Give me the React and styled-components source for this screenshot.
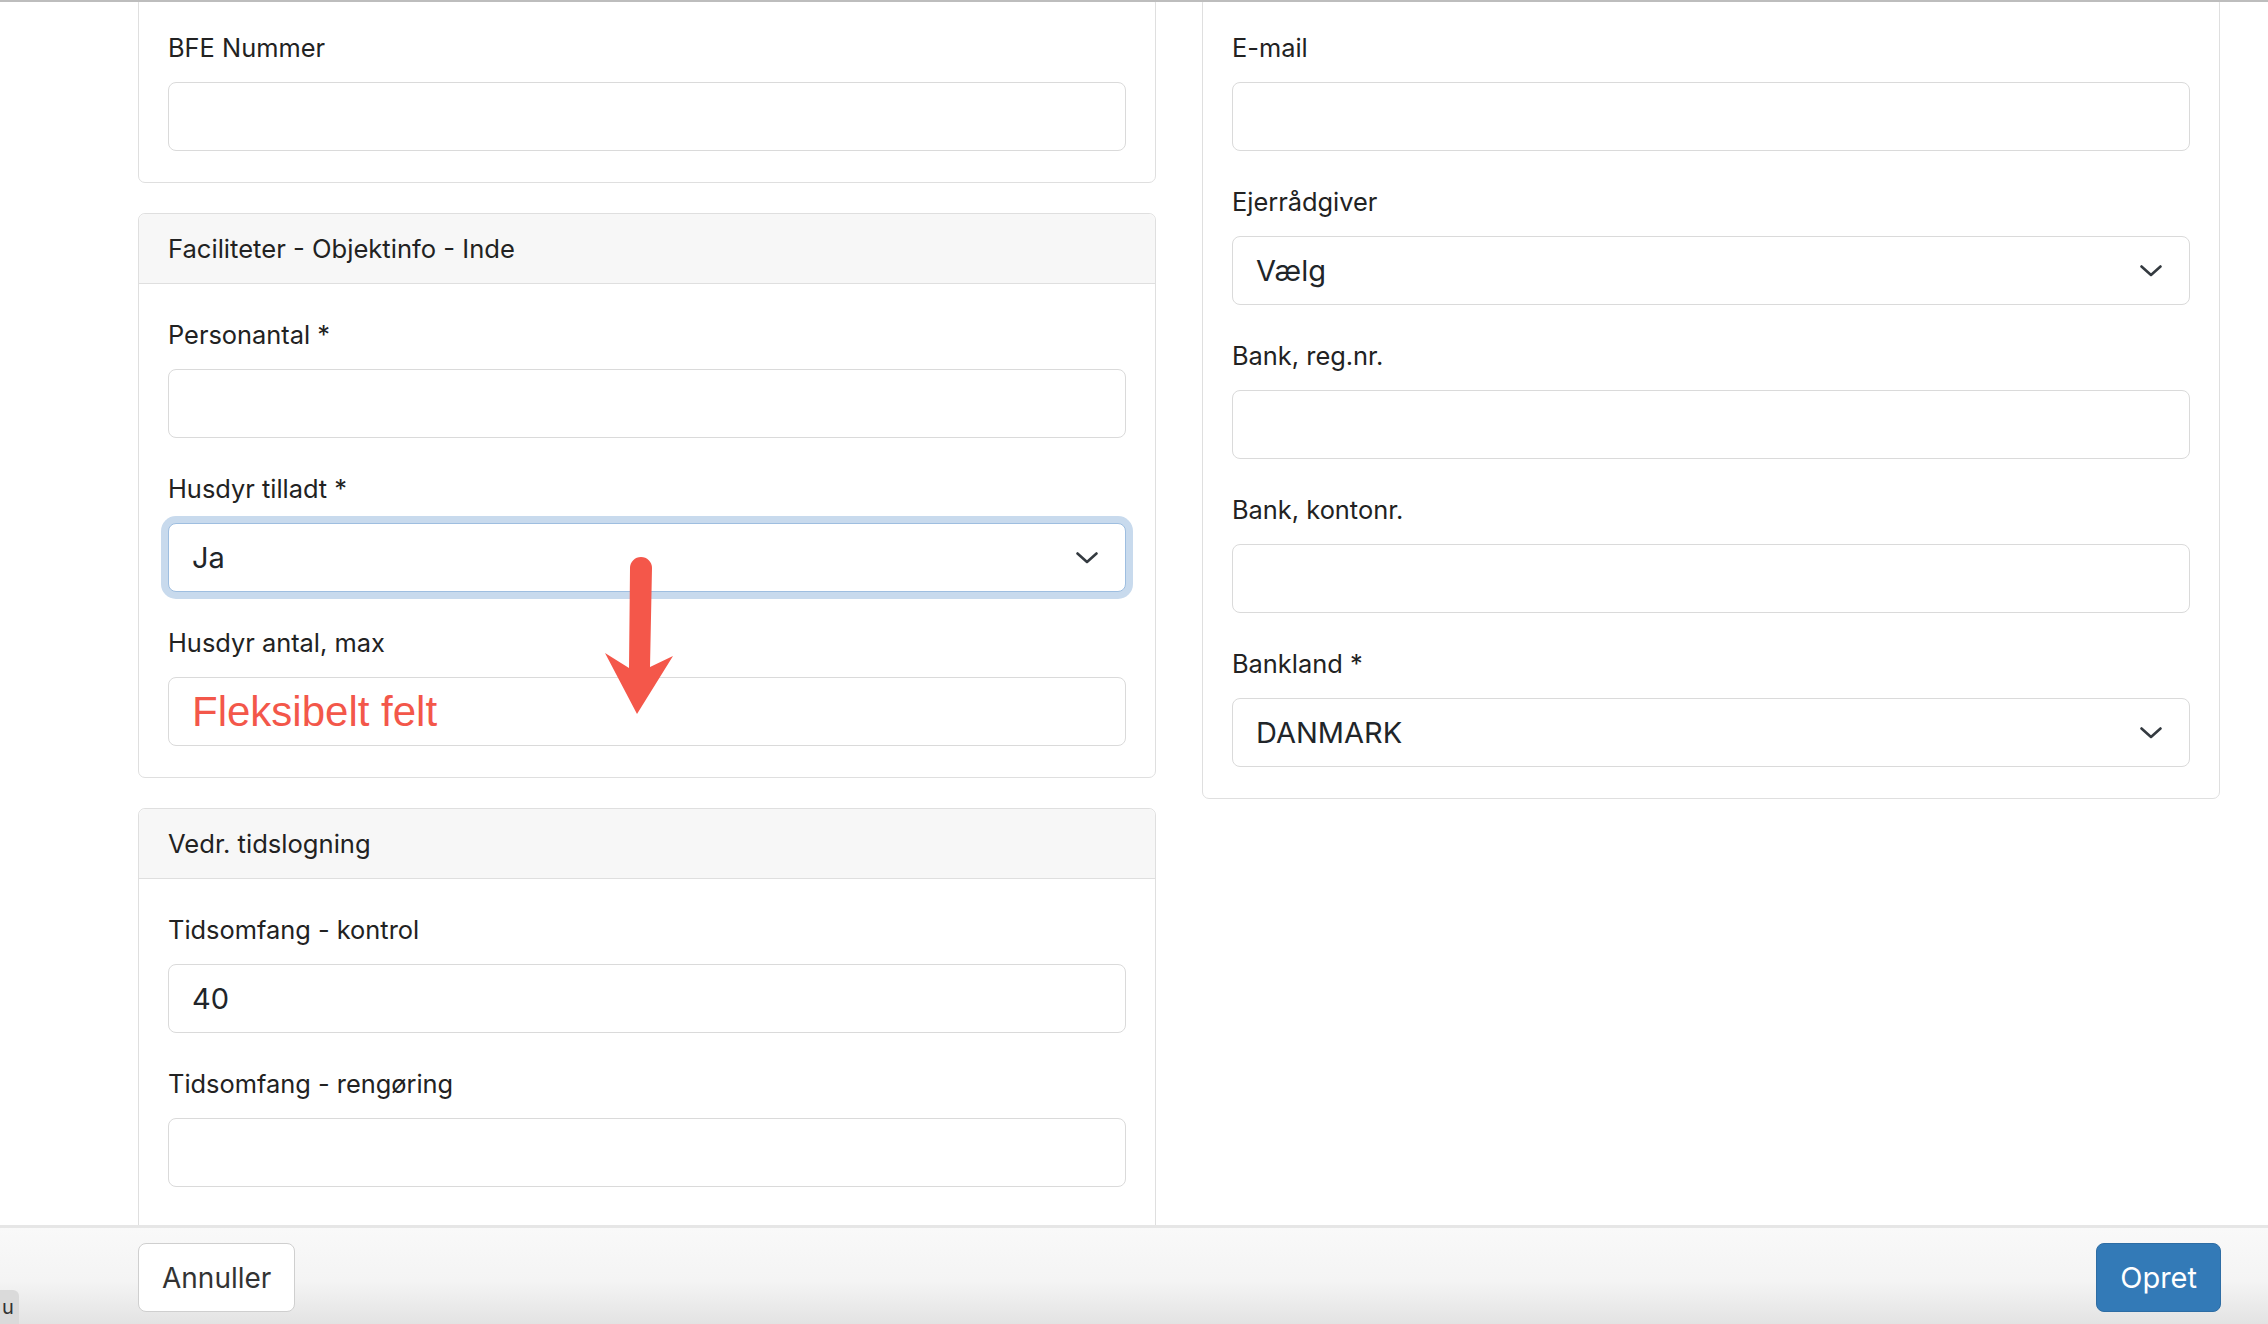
import styled, { createGlobalStyle } from "styled-components";

const GlobalStyle = createGlobalStyle`
  * { box-sizing: border-box; }
  html, body {
    margin: 0;
    padding: 0;
    height: 100%;
    overflow: hidden;
    background: #fff;
  }
  body {
    font-family: Inter, "Liberation Sans", sans-serif;
    color: #212529;
  }
`;

const Page = styled.div`
  position: relative;
  height: 1324px;
  border-top: 2px solid #bdbdbd;
  overflow: hidden;
`;

const Columns = styled.div`
  display: grid;
  grid-template-columns: 1018px 1018px;
  column-gap: 46px;
  align-items: start;
  padding: 0 48px 0 138px;
  margin-top: -6px;
`;

const Column = styled.div`
  display: flex;
  flex-direction: column;
  gap: 30px;
`;

const Card = styled.section`
  background: #fff;
  border: 1px solid #dfdfdf;
  border-radius: 7px;
`;

const CardHeader = styled.header`
  display: flex;
  align-items: center;
  height: 70px;
  padding: 0 29px;
  background: #f7f7f7;
  border-bottom: 1px solid #dfdfdf;
  border-radius: 7px 7px 0 0;
  font-size: 25.6px;
  line-height: 34px;
  color: #222;
`;

// the last card runs on under the footer
const CardBody = styled.div`
  padding: 34px 29px ${(p) => (p.$tail ? "120px" : "31px")};
`;

const Field = styled.div`
  & + & {
    margin-top: 34px;
  }
`;

const Label = styled.label`
  display: block;
  font-size: 25.4px;
  line-height: 34px;
  margin-bottom: 17px;
  color: #222;
`;

const TextInput = styled.input`
  display: block;
  width: 100%;
  height: 69px;
  padding: 0 23px;
  border: 1px solid #dadada;
  border-radius: 8px;
  background: #fff;
  outline: none;
  font-family: ${(p) => (p.$note ? '"Liberation Sans", Arial, sans-serif' : "inherit")};
  font-size: ${(p) => (p.$note ? "42px" : "29px")};
  color: ${(p) => (p.$note ? "#f3574a" : "#212529")};
`;

const SelectWrap = styled.div`
  position: relative;
`;

const Select = styled.select`
  display: block;
  width: 100%;
  height: 69px;
  padding: 0 60px 0 23px;
  appearance: none;
  border: 1px solid ${(p) => (p.$focused ? "#9ebee0" : "#dadada")};
  border-radius: 8px;
  background: #fff;
  box-shadow: ${(p) => (p.$focused ? "0 0 0 7px #c8daed" : "none")};
  outline: none;
  font-family: inherit;
  font-size: 29px;
  color: #212529;
`;

const Chevron = styled.svg`
  position: absolute;
  right: 28px;
  top: 50%;
  transform: translateY(-50%);
  pointer-events: none;
`;

const Footer = styled.footer`
  position: absolute;
  left: 0;
  right: 0;
  bottom: 0;
  height: 99px;
  display: flex;
  align-items: flex-start;
  justify-content: space-between;
  padding: 15px 47px 0 138px;
  border-top: 3px solid #e6e6e6;
  background: linear-gradient(#f9f9f9 0%, #f4f4f4 55%, #e3e3e3 100%);
`;

const Button = styled.button`
  height: 69px;
  padding: 0 23px;
  border-radius: 8px;
  font-family: inherit;
  font-size: ${(p) => (p.$primary ? "29px" : "28px")};
  cursor: pointer;
  border: 1px solid ${(p) => (p.$primary ? "#2e6da4" : "#cfcfcf")};
  background: ${(p) => (p.$primary ? "#337ab7" : "#fff")};
  color: ${(p) => (p.$primary ? "#fff" : "#333")};
`;

const Arrow = styled.svg`
  position: absolute;
  left: 600px;
  top: 548px;
  pointer-events: none;
`;

const CornerTab = styled.div`
  position: absolute;
  left: 0;
  bottom: 0;
  width: 19px;
  height: 34px;
  display: flex;
  align-items: center;
  padding-left: 2px;
  background: #dadada;
  border-top-right-radius: 6px;
  font-size: 20px;
  color: #333;
`;

const SelectField = ({ label, value, focused }) => (
  <Field>
    <Label>{label}</Label>
    <SelectWrap>
      <Select $focused={focused} defaultValue={value}>
        <option>{value}</option>
      </Select>
      <Chevron width="22" height="12" viewBox="0 0 22 12">
        <polyline
          points="1.5,1.5 11,10 20.5,1.5"
          fill="none"
          stroke="#343a40"
          strokeWidth="2.6"
          strokeLinecap="round"
          strokeLinejoin="round"
        />
      </Chevron>
    </SelectWrap>
  </Field>
);

const InputField = ({ label, value, note }) => (
  <Field>
    <Label>{label}</Label>
    <TextInput type="text" defaultValue={value} $note={note} />
  </Field>
);

export default function App() {
  return (
    <>
      <GlobalStyle />
      <Page>
        <Columns>
          <Column>
            <Card>
              <CardBody>
                <InputField label="BFE Nummer" />
              </CardBody>
            </Card>
            <Card>
              <CardHeader>Faciliteter - Objektinfo - Inde</CardHeader>
              <CardBody>
                <InputField label="Personantal *" />
                <SelectField label="Husdyr tilladt *" value="Ja" focused />
                <InputField label="Husdyr antal, max" value="Fleksibelt felt" note />
              </CardBody>
            </Card>
            <Card>
              <CardHeader>Vedr. tidslogning</CardHeader>
              <CardBody $tail>
                <InputField label="Tidsomfang - kontrol" value="40" />
                <InputField label="Tidsomfang - rengøring" />
              </CardBody>
            </Card>
          </Column>
          <Column>
            <Card>
              <CardBody>
                <InputField label="E-mail" />
                <SelectField label="Ejerrådgiver" value="Vælg" />
                <InputField label="Bank, reg.nr." />
                <InputField label="Bank, kontonr." />
                <SelectField label="Bankland *" value="DANMARK" />
              </CardBody>
            </Card>
          </Column>
        </Columns>

        <Arrow width="80" height="170" viewBox="0 0 80 170">
          <path
            d="M30 18 A11 11 0 0 1 52 18 L50 117 L73 106 L37 164 L5 103 L29 118 Z"
            fill="#f4574a"
          />
        </Arrow>

        <Footer>
          <Button>Annuller</Button>
          <Button $primary>Opret</Button>
        </Footer>
        <CornerTab>u</CornerTab>
      </Page>
    </>
  );
}
